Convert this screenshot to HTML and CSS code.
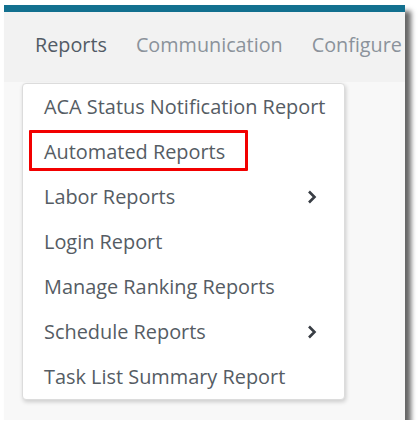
FILE: index.html
```html
<!DOCTYPE html>
<html>
<head>
<meta charset="utf-8">
<link rel="stylesheet" href="styles.css">
</head>
<body>
<div class="frame">
  <div class="topbar"></div>
  <nav class="nav">
    <span class="nav-item active">Reports</span>
    <span class="nav-item">Communication</span>
    <span class="nav-item">Configure</span>
  </nav>
  <div class="content">
    <div class="menu">
      <div class="item">ACA Status Notification Report</div>
      <div class="item">Automated Reports</div>
      <div class="item">Labor Reports
        <svg class="chev" width="12" height="16" viewBox="0 0 12 16"><path d="M3 2.5 L8.5 8 L3 13.5" fill="none" stroke="#383d44" stroke-width="2.6"/></svg>
      </div>
      <div class="item">Login Report</div>
      <div class="item">Manage Ranking Reports</div>
      <div class="item">Schedule Reports
        <svg class="chev" width="12" height="16" viewBox="0 0 12 16"><path d="M3 2.5 L8.5 8 L3 13.5" fill="none" stroke="#383d44" stroke-width="2.6"/></svg>
      </div>
      <div class="item">Task List Summary Report</div>
      <div class="highlight"></div>
    </div>
  </div>
</div>
</body>
</html>
```
FILE: styles.css
```css
html, body {
  margin: 0;
  padding: 0;
  background: #ffffff;
}
body {
  font-family: "Open Sans", "Liberation Sans", sans-serif;
}
.frame {
  margin: 5px 0 0 4px;
  width: 401px;
  height: 415px;
  display: flex;
  flex-direction: column;
  overflow: hidden;
  background: #f8f8f8;
  box-shadow: 6px 6px 5px rgba(0, 0, 0, 0.6);
}
.topbar {
  height: 7px;
  background: #12708f;
  flex: none;
}
.nav {
  height: 70px;
  flex: none;
  box-sizing: border-box;
  background: #f2f2f2;
  display: flex;
  align-items: center;
  padding: 0 0 6px 31px;
  gap: 29px;
  white-space: nowrap;
}
.nav-item {
  font-size: 19.8px;
  color: #8b929b;
}
.nav-item.active {
  color: #525b66;
}
.content {
  flex: 1;
  padding: 1px 0 0 18px;
}
.menu {
  position: relative;
  width: 323px;
  box-sizing: border-box;
  background: #ffffff;
  border: 1px solid #dcdcdc;
  border-radius: 4px;
  box-shadow: 1px 2px 4px rgba(0, 0, 0, 0.18);
}
.item {
  height: 45px;
  line-height: 45px;
  padding: 0 26px 0 21px;
  font-size: 19.9px;
  color: #555c64;
  display: flex;
  justify-content: space-between;
  align-items: center;
  white-space: nowrap;
}
.chev {
  display: block;
}
.highlight {
  position: absolute;
  left: 6px;
  top: 46px;
  width: 219px;
  height: 41px;
  box-sizing: border-box;
  border: 3px solid #f20000;
  border-radius: 1px;
}
```
